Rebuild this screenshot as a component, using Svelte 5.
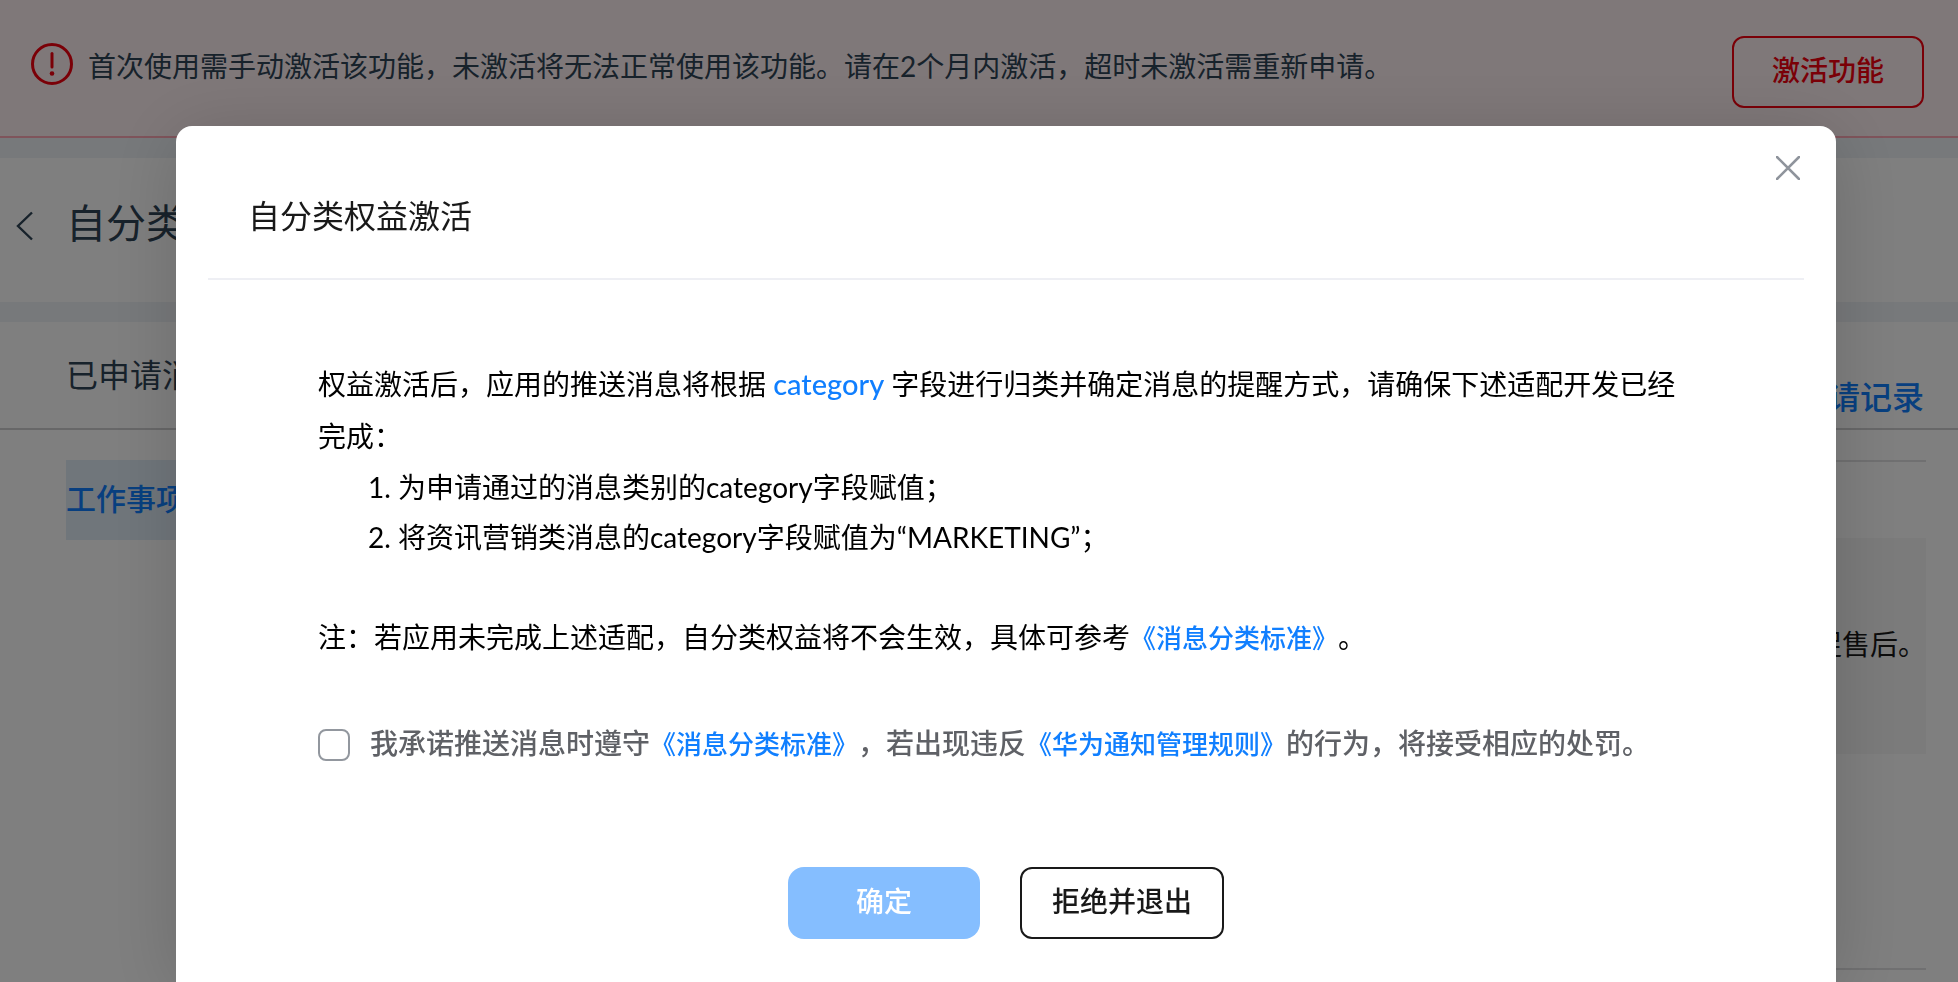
<script>
  let agreed = $state(false);
</script>

<div class="page">
  <section class="banner">
    <svg class="warn" viewBox="0 0 42 42" aria-hidden="true">
      <circle cx="21" cy="21" r="19.5" fill="none" stroke="currentColor" stroke-width="3" />
      <path d="M21 10.5v13.5" stroke="currentColor" stroke-width="3" stroke-linecap="round" />
      <circle cx="21" cy="30.5" r="2.3" fill="currentColor" />
    </svg>
    <p>首次使用需手动激活该功能，未激活将无法正常使用该功能。请在2个月内激活，超时未激活需重新申请。</p>
    <button class="activate" type="button">激活功能</button>
  </section>

  <header class="heading">
    <button class="back" type="button" aria-label="返回">
      <svg viewBox="0 0 18 30" aria-hidden="true">
        <path d="M16 1.5L2 15l14 13.5" fill="none" stroke="currentColor" stroke-width="2.4" />
      </svg>
    </button>
    <h1>自分类</h1>
  </header>

  <main class="content">
    <div class="bar">
      <h2>已申请消</h2>
      <a href="#records">请记录</a>
    </div>
    <div class="columns">
      <nav><a href="#work">工作事项</a></nav>
      <div class="detail">
        <p>促售后。</p>
      </div>
    </div>
  </main>
</div>

<div class="overlay">
  <div class="dialog" role="dialog" aria-modal="true" aria-labelledby="dialog-title">
    <button class="close" type="button" aria-label="关闭">
      <svg viewBox="0 0 24 24" aria-hidden="true">
        <path d="M1 1l22 22M23 1L1 23" fill="none" stroke="currentColor" stroke-width="2.6" stroke-linecap="round" />
      </svg>
    </button>
    <div class="dialog-head">
      <h2 id="dialog-title">自分类权益激活</h2>
    </div>
    <div class="dialog-body">
      <p class="intro">权益激活后，应用的推送消息将根据 <a class="field" href="#category">category</a> 字段进行归类并确定消息的提醒方式，请确保下述适配开发已经完成：</p>
      <ol>
        <li>为申请通过的消息类别的category字段赋值；</li>
        <li>将资讯营销类消息的category字段赋值为“MARKETING”；</li>
      </ol>
      <p class="note">注：若应用未完成上述适配，自分类权益将不会生效，具体可参考<a class="doc" href="#standard">《消息分类标准》</a>。</p>
      <div class="agree">
        <input id="agree" type="checkbox" bind:checked={agreed} />
        <label for="agree">我承诺推送消息时遵守<a class="doc" href="#standard">《消息分类标准》</a>，若出现违反<a class="doc" href="#rules">《华为通知管理规则》</a>的行为，将接受相应的处罚。</label>
      </div>
      <div class="actions">
        <button class="confirm" class:ready={agreed} type="button" disabled={!agreed}>确定</button>
        <button class="reject" type="button">拒绝并退出</button>
      </div>
    </div>
  </div>
</div>

<style>
  :global(body) {
    background: #fff;
    font-family: Lato, "Noto Sans CJK SC", sans-serif;
    font-size: 28px;
    text-spacing-trim: space-all;
  }

  h1, h2, p, ol {
    margin: 0;
    font-weight: 400;
  }

  button {
    box-sizing: border-box;
    font: inherit;
    cursor: pointer;
  }

  svg {
    display: block;
  }

  a {
    color: #107fff;
    font-weight: 500;
    text-decoration: none;
  }

  .page {
    color: #2f4456;
    background: #eff3f6;
  }

  .banner {
    display: flex;
    align-items: flex-start;
    height: 136px;
    padding: 0 34px 0 31px;
    border-bottom: 2px solid #ffa8b6;
    background: #fff0f2;
  }

  .warn {
    width: 42px;
    height: 42px;
    margin: 43px 15px 0 0;
    color: #f5000f;
  }

  .banner p {
    flex: 1;
    margin-top: 46px;
    line-height: 40px;
    white-space: nowrap;
  }

  .activate {
    width: 192px;
    height: 72px;
    margin-top: 36px;
    padding: 0 0 6px;
    border: 2px solid #f5000f;
    border-radius: 12px;
    color: #f5000f;
    background: transparent;
    font-weight: 500;
  }

  .heading {
    display: flex;
    align-items: center;
    height: 136px;
    margin: 20px 0;
    padding: 0 16px 8px;
    background: #fff;
  }

  .back {
    width: 50px;
    padding: 0;
    border: 0;
    color: inherit;
    background: none;
  }

  .back svg {
    width: 18px;
    height: 30px;
  }

  .heading h1 {
    padding-bottom: 6px;
    font-size: 40px;
    line-height: 48px;
  }

  .content {
    background: #fff;
  }

  .bar {
    display: flex;
    justify-content: space-between;
    height: 106px;
    padding: 0 34px 0 66px;
    border-bottom: 2px solid #cfcfd1;
    line-height: 106px;
  }

  .bar h2 {
    font-size: 32px;
  }

  .bar a {
    height: 84px;
    padding-top: 22px;
    font-size: 32px;
  }

  .columns {
    display: flex;
    padding: 30px 32px 0 66px;
  }

  nav {
    width: 200px;
  }

  nav a {
    display: block;
    height: 80px;
    font-size: 30px;
    line-height: 76px;
    background: #e0ecf6;
  }

  .detail {
    flex: 1;
    height: 430px;
    padding-top: 76px;
    border-top: 2px solid #e0e0e2;
    border-bottom: 2px solid #e0e0e2;
    color: #191919;
  }

  .detail p {
    display: flex;
    justify-content: flex-end;
    height: 216px;
    line-height: 212px;
    background: #f6f6f6;
  }

  .overlay {
    position: fixed;
    inset: 0;
    overflow: hidden;
    padding: 126px 122px 0 176px;
    background: rgba(0, 0, 0, 0.5);
  }

  .dialog {
    position: relative;
    min-height: calc(100vh - 126px);
    border-radius: 16px 16px 0 0;
    color: #000;
    background: #fff;
    box-shadow: 0 8px 72px rgba(0, 0, 0, 0.16);
  }

  .close {
    position: absolute;
    top: 30px;
    right: 36px;
    padding: 0;
    border: 0;
    color: #8f949c;
    background: none;
  }

  .close svg {
    width: 24px;
    height: 24px;
  }

  .dialog-head {
    margin: 0 32px;
    padding: 66px 40px 38px;
    border-bottom: 2px solid #eeeff4;
    color: #191919;
  }

  .dialog-head h2 {
    font-size: 32px;
    line-height: 48px;
  }

  .dialog-body {
    padding: 78px 142px 0;
  }

  .intro {
    line-height: 52px;
  }

  .field {
    font-size: 29px;
  }

  ol {
    padding-left: 80px;
    line-height: 50px;
  }

  .note {
    margin-top: 50px;
    line-height: 50px;
  }

  .doc {
    font-size: 26px;
  }

  .agree {
    display: flex;
    align-items: center;
    gap: 20px;
    margin-top: 55px;
    color: #5f6166;
    font-weight: 500;
  }

  .agree label {
    padding-bottom: 2px;
    line-height: 50px;
  }

  input {
    box-sizing: border-box;
    width: 32px;
    height: 32px;
    margin: 0;
    border: 2px solid #92979e;
    border-radius: 8px;
    background: #fff;
    appearance: none;
  }

  input:checked {
    border-color: #107fff;
    background: #107fff;
  }

  .actions {
    display: flex;
    justify-content: center;
    gap: 40px;
    margin-top: 96px;
  }

  .actions button {
    height: 72px;
    font-weight: 500;
  }

  .confirm {
    width: 192px;
    padding: 0 0 6px;
    border: 0;
    border-radius: 16px;
    color: #fff;
    background: #85beff;
  }

  .confirm.ready {
    background: #107fff;
  }

  .reject {
    padding: 0 30px 6px;
    border: 2px solid #191919;
    border-radius: 12px;
    color: #191919;
    background: #fff;
  }
</style>
